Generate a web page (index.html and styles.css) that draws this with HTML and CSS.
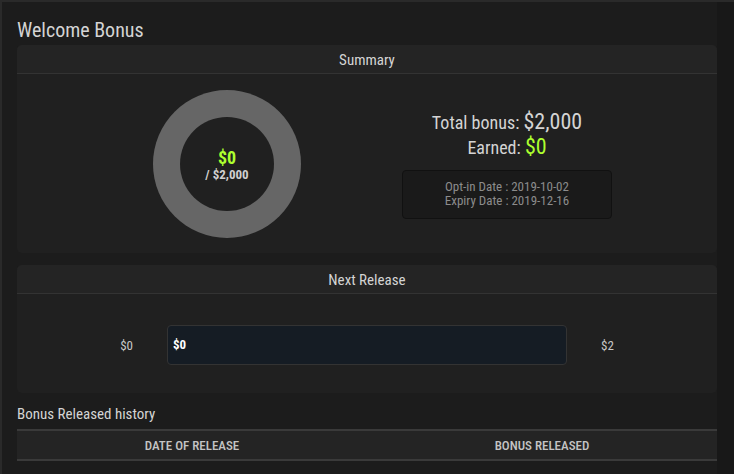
FILE: index.html
```html
<!DOCTYPE html>
<html lang="en">
  <head>
    <meta charset="UTF-8" />
    <meta name="viewport" content="width=device-width, initial-scale=1.0" />
    <title>Welcome Bonus</title>
    <link rel="stylesheet" href="styles.css">
  </head>
  <body>
    <div class="wrap">
      <h2 class="title">Welcome Bonus</h2>

      <div class="card">
        <div class="card-head">Summary</div>
        <div class="summary">
          <div class="donut">
            <div class="donut-hole">
              <div class="earned">$0</div>
              <div class="of">/ $2,000</div>
            </div>
          </div>
          <div class="info">
            <div class="line">Total bonus: <span class="big">$2,000</span></div>
            <div class="line">Earned: <span class="big green">$0</span></div>
            <div class="dates">
              Opt-in Date : 2019-10-02<br />
              Expiry Date : 2019-12-16
            </div>
          </div>
        </div>
      </div>

      <div class="card">
        <div class="card-head">Next Release</div>
        <div class="release">
          <span class="lbl">$0</span>
          <div class="bar">$0</div>
          <span class="lbl">$2</span>
        </div>
      </div>

      <h3 class="sub">Bonus Released history</h3>
      <table class="history">
        <thead>
          <tr>
            <th>Date of release</th>
            <th>Bonus released</th>
          </tr>
        </thead>
      </table>
    </div>
  </body>
</html>
```

FILE: styles.css
```css
body {
  margin: 0;
  background: #181818;
  border-top: 2px solid #2a2a2a;
  font-family: Roboto, "Liberation Sans", sans-serif;
  font-stretch: 80%;
  color: #d4d4d4;
}
.wrap {
  width: 717px;
  height: 472px;
  box-sizing: border-box;
  background: #1c1c1c;
  border-left: 2px solid #2a2a2a;
  padding-left: 15px;
  overflow: hidden;
}
.title {
  margin: 0;
  padding-top: 16px;
  height: 27px;
  font-size: 20px;
  font-weight: 400;
  line-height: 24px;
}
.card {
  background: #202020;
  border-radius: 5px;
  margin-bottom: 12px;
  width: 700px;
}
.card-head {
  background: #242424;
  border-bottom: 1px solid #333;
  border-radius: 5px 5px 0 0;
  height: 28px;
  line-height: 30px;
  text-align: center;
  font-size: 15px;
}
.summary {
  display: grid;
  grid-template-columns: 280px 280px;
  justify-content: center;
  align-items: center;
  height: 179px;
}
.donut {
  width: 148px;
  height: 148px;
  border-radius: 50%;
  background: #666;
  display: flex;
  align-items: center;
  justify-content: center;
  justify-self: center;
  margin-top: 1px;
}
.donut-hole {
  width: 94px;
  height: 94px;
  border-radius: 50%;
  background: #202020;
  display: flex;
  flex-direction: column;
  align-items: center;
  justify-content: center;
  padding-top: 3px;
  box-sizing: border-box;
}
.earned {
  color: #adff2f;
  font-weight: 700;
  font-size: 18px;
  line-height: 18px;
}
.of {
  font-weight: 700;
  font-size: 13px;
  line-height: 15px;
  color: #d0d0d0;
}
.info {
  display: flex;
  flex-direction: column;
  align-items: center;
  padding-top: 2px;
}
.line {
  font-size: 18px;
  line-height: 24px;
}
.big {
  font-size: 22px;
}
.green {
  color: #adff2f;
}
.dates {
  margin-top: 10px;
  width: 210px;
  height: 49px;
  box-sizing: border-box;
  background: #1a1a1a;
  border: 1px solid #111;
  border-radius: 4px;
  text-align: center;
  font-size: 13px;
  line-height: 14px;
  color: #8c8c8c;
  padding-top: 9px;
}
.release {
  display: flex;
  align-items: center;
  justify-content: center;
  gap: 34px;
  height: 99px;
  padding-top: 3px;
  box-sizing: border-box;
}
.lbl {
  font-size: 13px;
  color: #c8c8c8;
}
.bar {
  width: 400px;
  height: 40px;
  box-sizing: border-box;
  background: #151c24;
  border: 1px solid #333;
  border-radius: 4px;
  padding-left: 5px;
  line-height: 38px;
  font-weight: 700;
  font-size: 13px;
  color: #fff;
}
.sub {
  margin: 0;
  font-size: 15px;
  font-weight: 400;
  line-height: 16px;
  height: 24px;
  padding-top: 1px;
  box-sizing: border-box;
}
.history {
  width: 700px;
  border-collapse: collapse;
}
.history th {
  background: #242424;
  border-top: 2px solid #3a3a3a;
  border-bottom: 2px solid #3a3a3a;
  height: 28px;
  font-size: 13px;
  font-weight: 500;
  text-transform: uppercase;
  color: #c4c4c4;
  width: 50%;
  padding: 0;
}
```
